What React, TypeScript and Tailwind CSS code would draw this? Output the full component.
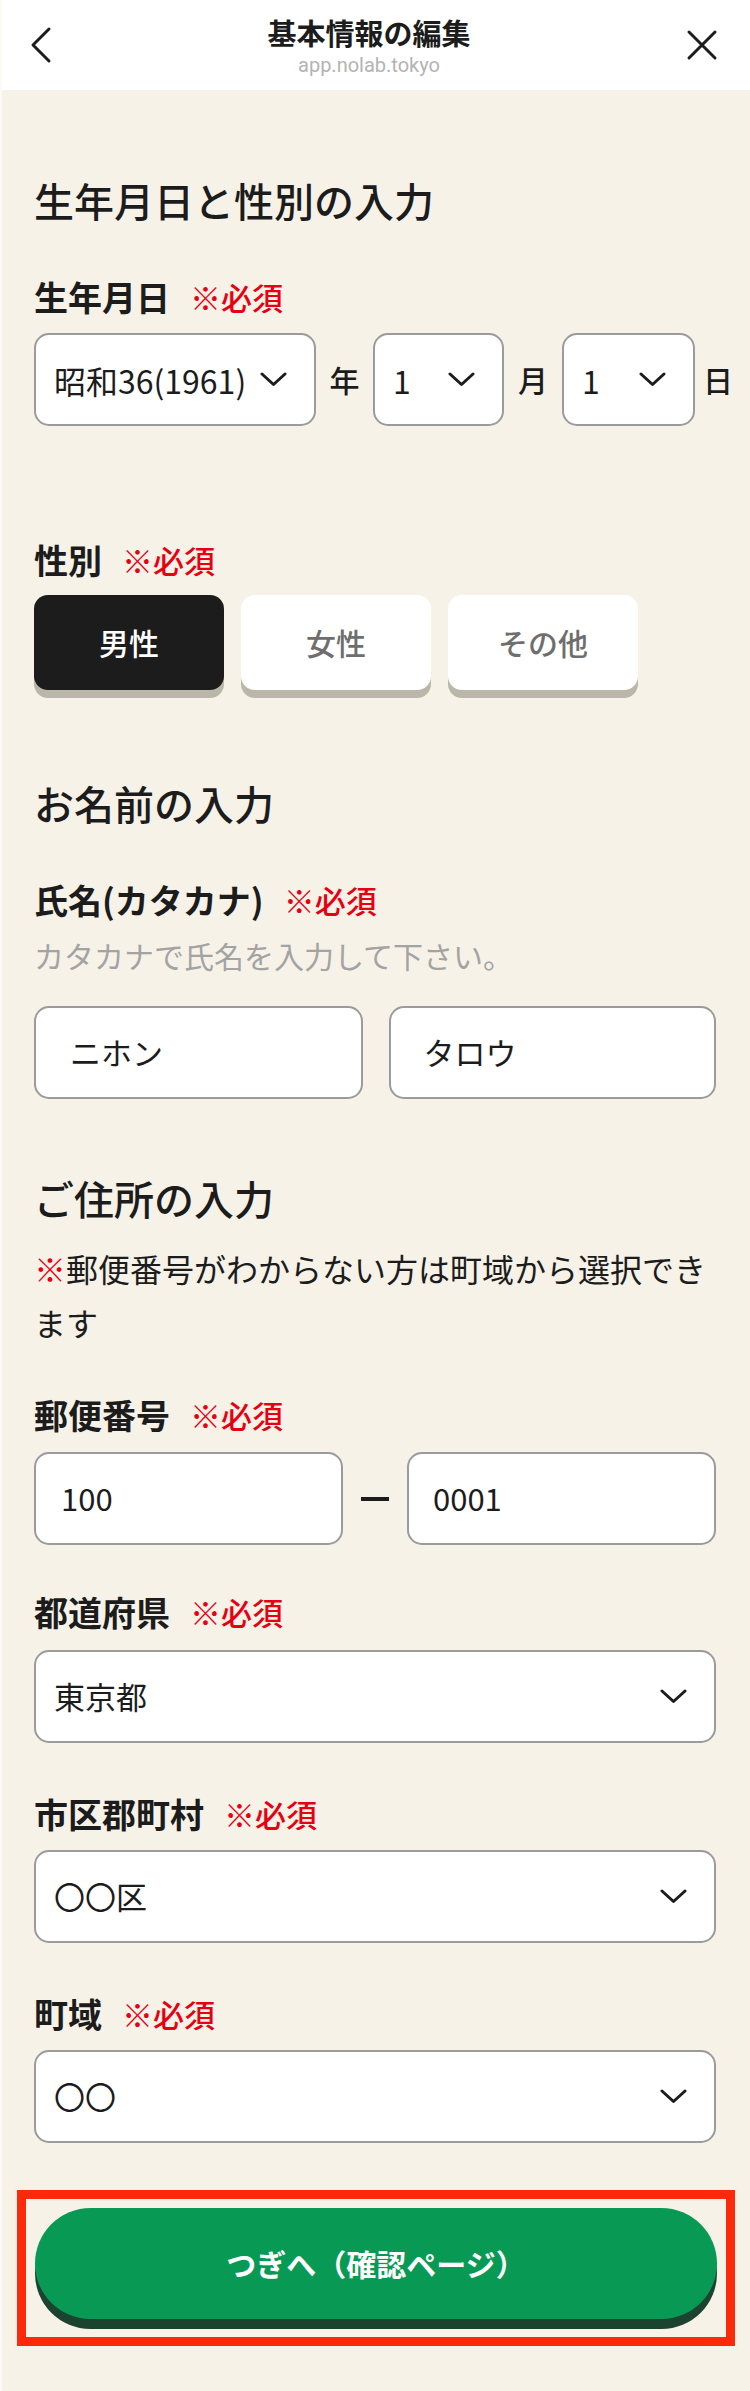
import type { ReactNode } from 'react';

const FONT = "font-['Noto_Sans_CJK_JP','Noto_Sans',sans-serif]";

function Chevron() {
  return (
    <svg width="27" height="15" viewBox="0 0 27 15" fill="none" className="shrink-0">
      <path d="M2 2 L13.5 12.5 L25 2" stroke="#1c1c1c" strokeWidth="3" strokeLinecap="round" strokeLinejoin="round" />
    </svg>
  );
}

function Label({ children, required = true }: { children: ReactNode; required?: boolean }) {
  return (
    <div className="flex items-center h-[48px] leading-[48px]">
      <span className="text-[34px] font-bold text-[#1c1c1c]">{children}</span>
      {required && <span className="ml-[20px] text-[31px] font-medium text-[#e60012]">※必須</span>}
    </div>
  );
}

function Heading({ children }: { children: ReactNode }) {
  return <h2 className="text-[40px] leading-[56px] font-medium text-[#1c1c1c]">{children}</h2>;
}

function SelectBox({
  value,
  className = '',
  textSize = 'text-[31px]',
}: {
  value: string;
  className?: string;
  textSize?: string;
}) {
  return (
    <div
      className={`flex items-center justify-between h-[93px] bg-white border-2 border-[#9b9b9b] rounded-[15px] pl-[18px] pr-[27px] ${className}`}
    >
      <span className={`${textSize} text-[#1c1c1c] whitespace-nowrap`}>{value}</span>
      <Chevron />
    </div>
  );
}

function TextBox({ value, padding, className = '' }: { value: string; padding: string; className?: string }) {
  return (
    <div className={`flex items-center h-[93px] bg-white border-2 border-[#9b9b9b] rounded-[15px] ${padding} ${className}`}>
      <span className="text-[31px] text-[#1c1c1c]">{value}</span>
    </div>
  );
}

function GenderButton({ label, active }: { label: string; active?: boolean }) {
  return (
    <button
      className={`w-[190px] h-[95px] rounded-[14px] text-[30px] font-medium shadow-[0_8px_0_#bab6aa] ${
        active ? 'bg-[#1c1c1c] text-white' : 'bg-white text-[#6e6e6e]'
      }`}
    >
      {label}
    </button>
  );
}

export default function App() {
  return (
    <div className={`min-h-[2391px] bg-[#f6f2e8] border-l-2 border-[#fbfaf5] ${FONT}`}>
      <header className="h-[90px] bg-white flex items-center justify-between pl-[28px] pr-[32px]">
        <svg width="22" height="38" viewBox="0 0 22 38" fill="none">
          <path d="M19 3 L3 19 L19 35" stroke="#1c1c1c" strokeWidth="3" strokeLinecap="round" strokeLinejoin="round" />
        </svg>
        <div className="flex flex-col items-center pt-[2px]">
          <span className="text-[29px] leading-[36px] font-bold text-[#1c1c1c]">基本情報の編集</span>
          <span className="mt-[2px] text-[20px] leading-[26px] text-[#b3b3b3] font-['Roboto',sans-serif]">
            app.nolab.tokyo
          </span>
        </div>
        <svg width="32" height="32" viewBox="0 0 32 32" fill="none">
          <path d="M3 3 L29 29 M29 3 L3 29" stroke="#1c1c1c" strokeWidth="3" strokeLinecap="round" />
        </svg>
      </header>

      <main className="pl-[32px] pr-[34px] pt-[82px] pb-[42px]">
        <Heading>生年月日と性別の入力</Heading>
        <div className="mt-[45px]">
          <Label>生年月日</Label>
          <div className="mt-[12px] flex items-center">
            <SelectBox value="昭和36(1961)" textSize="text-[32px]" className="w-[282px] shrink-0" />
            <span className="w-[57px] shrink-0 text-center text-[30px] font-medium text-[#1c1c1c]">年</span>
            <SelectBox value="1" textSize="text-[32px]" className="w-[131px] shrink-0" />
            <span className="w-[58px] shrink-0 text-center text-[30px] font-medium text-[#1c1c1c]">月</span>
            <SelectBox value="1" textSize="text-[32px]" className="w-[133px] shrink-0" />
            <span className="ml-[8px] shrink-0 text-[30px] font-medium text-[#1c1c1c]">日</span>
          </div>
        </div>

        <div className="mt-[110px]">
          <Label>性別</Label>
          <div className="mt-[11px] flex gap-[17px]">
            <GenderButton label="男性" active />
            <GenderButton label="女性" />
            <GenderButton label="その他" />
          </div>
        </div>

        <div className="mt-[85px]">
          <Heading>お名前の入力</Heading>
        </div>
        <div className="mt-[45px]">
          <Label>氏名(カタカナ)</Label>
          <p className="mt-[9px] text-[30px] leading-[44px] text-[#a3a3a3]">カタカナで氏名を入力して下さい。</p>
          <div className="mt-[29px] flex gap-[26px]">
            <TextBox value="ニホン" padding="pl-[34px]" className="flex-1" />
            <TextBox value="タロウ" padding="pl-[33px]" className="flex-1" />
          </div>
        </div>

        <div className="mt-[71px]">
          <Heading>ご住所の入力</Heading>
        </div>
        <p className="mt-[15px] text-[32px] leading-[54px] text-[#1c1c1c]">
          <span className="text-[#e60012]">※</span>郵便番号がわからない方は町域から選択できます
        </p>

        <div className="mt-[42px]">
          <Label>郵便番号</Label>
          <div className="mt-[13px] flex items-center">
            <TextBox value="100" padding="pl-[25px]" className="w-[309px] shrink-0" />
            <div className="mx-[18px] w-[28px] h-[4px] shrink-0 bg-[#1c1c1c]" />
            <TextBox value="0001" padding="pl-[24px]" className="flex-1" />
          </div>
        </div>

        <div className="mt-[43px]">
          <Label>都道府県</Label>
          <SelectBox value="東京都" className="mt-[14px]" />
        </div>

        <div className="mt-[47px]">
          <Label>市区郡町村</Label>
          <SelectBox value="〇〇区" className="mt-[12px]" />
        </div>

        <div className="mt-[47px]">
          <Label>町域</Label>
          <SelectBox value="〇〇" className="mt-[12px]" />
        </div>

        <div className="mt-[47px] -ml-[17px] -mr-[19px] border-[9px] border-[#fc2a0a] p-[9px] pb-[8px]">
          <button className="w-full h-[111px] rounded-full bg-[#089a55] shadow-[0_10px_0_#1b4330] text-white text-[30px] font-bold">
            つぎへ（確認ページ）
          </button>
          <div className="h-[10px]" />
        </div>
      </main>
    </div>
  );
}
